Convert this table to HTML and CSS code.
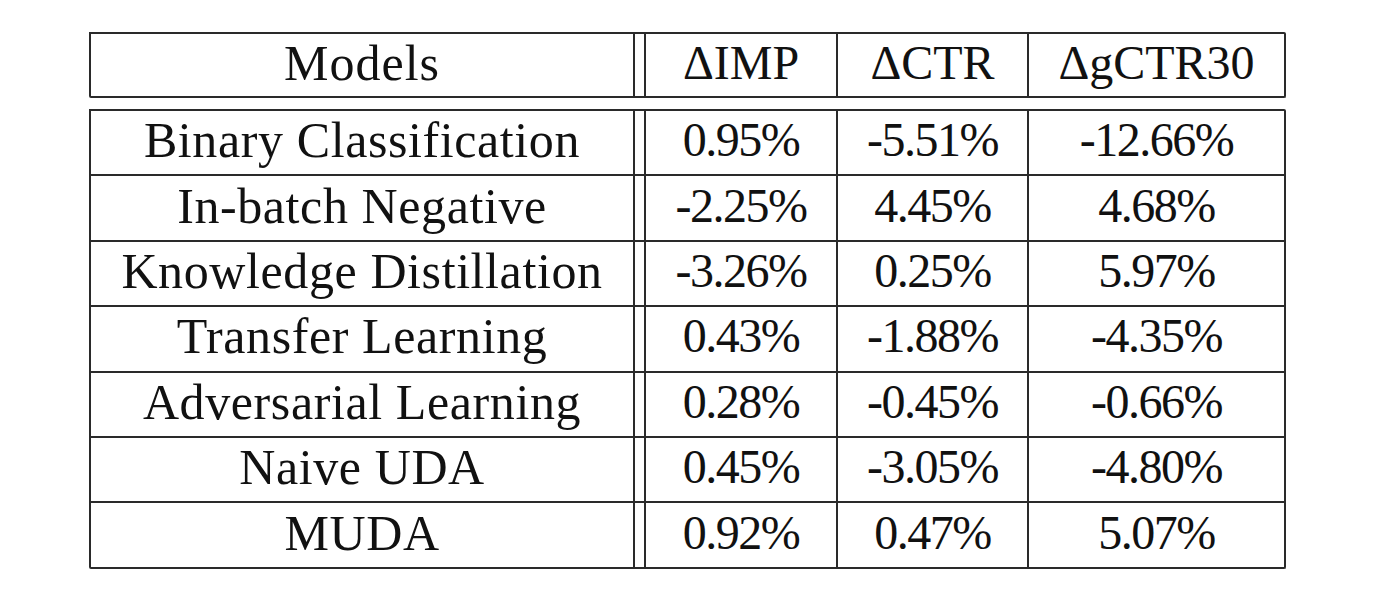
FILE: index.html
```html
<!DOCTYPE html>
<html>
<head>
<meta charset="utf-8">
<link rel="stylesheet" href="styles.css">
</head>
<body>
<div class="page">
  <div class="box head">
    <div class="row">
      <div class="cell c1">Models</div><div class="cell sp"></div><div class="cell c2">ΔIMP</div><div class="cell c3">ΔCTR</div><div class="cell c4">ΔgCTR30</div>
    </div>
  </div>
  <div class="box body">
    <div class="row">
      <div class="cell c1">Binary Classification</div><div class="cell sp"></div><div class="cell c2">0.95%</div><div class="cell c3">-5.51%</div><div class="cell c4">-12.66%</div>
    </div>
    <div class="row">
      <div class="cell c1">In-batch Negative</div><div class="cell sp"></div><div class="cell c2">-2.25%</div><div class="cell c3">4.45%</div><div class="cell c4">4.68%</div>
    </div>
    <div class="row">
      <div class="cell c1">Knowledge Distillation</div><div class="cell sp"></div><div class="cell c2">-3.26%</div><div class="cell c3">0.25%</div><div class="cell c4">5.97%</div>
    </div>
    <div class="row">
      <div class="cell c1">Transfer Learning</div><div class="cell sp"></div><div class="cell c2">0.43%</div><div class="cell c3">-1.88%</div><div class="cell c4">-4.35%</div>
    </div>
    <div class="row">
      <div class="cell c1">Adversarial Learning</div><div class="cell sp"></div><div class="cell c2">0.28%</div><div class="cell c3">-0.45%</div><div class="cell c4">-0.66%</div>
    </div>
    <div class="row">
      <div class="cell c1">Naive UDA</div><div class="cell sp"></div><div class="cell c2">0.45%</div><div class="cell c3">-3.05%</div><div class="cell c4">-4.80%</div>
    </div>
    <div class="row">
      <div class="cell c1">MUDA</div><div class="cell sp"></div><div class="cell c2">0.92%</div><div class="cell c3">0.47%</div><div class="cell c4">5.07%</div>
    </div>
  </div>
</div>
</body>
</html>
```
FILE: styles.css
```css
* { box-sizing: border-box; }
html, body { margin: 0; padding: 0; background: #ffffff; }
body {
  font-family: "Liberation Serif", "Times New Roman", serif;
  color: #111;
  font-size: 48px;
}
.page {
  padding: 32px 0 0 89px;
}
.box {
  width: 1197px;
  border-bottom: 2px solid #2a2a2a;
  border-right: 2px solid #2a2a2a;
  border-radius: 2px;
}
.head { margin-bottom: 11px; }
.row {
  display: flex;
  border-top: 2px solid #2a2a2a;
}
.head .row { height: 64px; }
.body .row { height: 65.4px; }
.cell {
  border-left: 2px solid #2a2a2a;
  display: flex;
  align-items: center;
  justify-content: center;
  white-space: nowrap;
  line-height: 1;
  padding-bottom: 5px;
}
.c1 { width: 544px; font-size: 50px; letter-spacing: 0.6px; }
.head .c1 { letter-spacing: 1px; }
.sp { width: 11px; }
.c2 { width: 192px; }
.c3 { width: 191px; }
.c4 { flex: 1; }
.body .c2, .body .c3, .body .c4 { letter-spacing: -1.5px; }
```
